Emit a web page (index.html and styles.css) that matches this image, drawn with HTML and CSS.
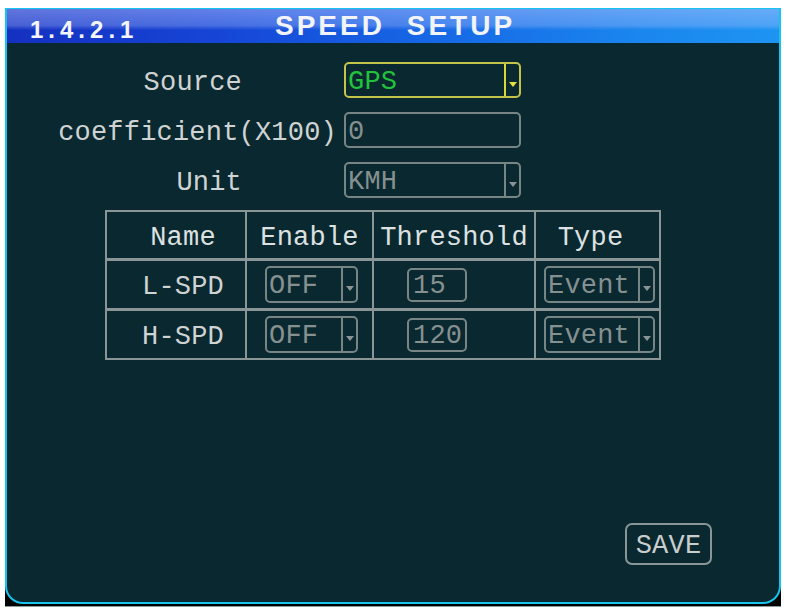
FILE: index.html
```html
<!DOCTYPE html>
<html>
<head>
<meta charset="utf-8">
<title>Speed Setup</title>
<link rel="stylesheet" href="styles.css">
</head>
<body>
<div class="screen">
  <div class="panel">
    <header class="titlebar">
      <span class="menu-id">1.4.2.1</span>
      <span class="title">SPEED SETUP</span>
    </header>

    <div class="form">
      <div class="label label-short">Source</div>
      <div class="field select active">
        <span class="value green">GPS</span>
        <span class="arrow"><i></i></span>
      </div>

      <div class="label">coefficient(X100)</div>
      <div class="field input">
        <span class="value">0</span>
      </div>

      <div class="label label-short">Unit</div>
      <div class="field select">
        <span class="value">KMH</span>
        <span class="arrow"><i></i></span>
      </div>
    </div>

    <div class="tbl">
      <div class="cell head name">Name</div>
      <div class="cell head">Enable</div>
      <div class="cell head">Threshold</div>
      <div class="cell head type">Type</div>

      <div class="cell name">L-SPD</div>
      <div class="cell left"><div class="field select enable"><span class="value">OFF</span><span class="arrow"><i></i></span></div></div>
      <div class="cell left"><div class="field input thr"><span class="value">15</span></div></div>
      <div class="cell left"><div class="field select evt"><span class="value">Event</span><span class="arrow"><i></i></span></div></div>

      <div class="cell name">H-SPD</div>
      <div class="cell left"><div class="field select enable"><span class="value">OFF</span><span class="arrow"><i></i></span></div></div>
      <div class="cell left"><div class="field input thr"><span class="value">120</span></div></div>
      <div class="cell left"><div class="field select evt"><span class="value">Event</span><span class="arrow"><i></i></span></div></div>
    </div>

    <div class="footer">
      <div class="save">SAVE</div>
    </div>
  </div>
</div>
</body>
</html>
```

FILE: styles.css
```css
* { box-sizing: border-box; }

html, body {
  margin: 0;
  padding: 0;
  background: #ffffff;
}

body {
  font-family: "Liberation Mono", "Courier New", monospace;
}

.screen {
  width: 776px;
  height: 599px;
  margin: 8px 0 0 5px;
  background: #000000;
  border-bottom: 1px solid #8e9a9a;
}

.panel {
  height: 596px;
  background: #0a282f;
  border: 2px solid #17c4ee;
  border-top-width: 1px;
  border-radius: 0 0 18px 18px;
  display: flex;
  flex-direction: column;
}

/* ---------- title bar ---------- */
.titlebar {
  height: 34px;
  display: flex;
  align-items: center;
  padding-left: 23px;
  background:
    linear-gradient(to bottom, rgba(190,200,255,0.45) 0%, rgba(175,195,255,0.33) 48%, rgba(255,255,255,0) 62%),
    linear-gradient(to right, #1530c0 0%, #1646d6 28%, #1664e4 52%, #1a86ee 82%, #1e94f2 100%);
}

.menu-id {
  width: 245px;
  padding-top: 8px;
  font-family: "Liberation Sans", Arial, sans-serif;
  font-weight: bold;
  font-size: 24px;
  letter-spacing: 5px;
  color: #f4f6ff;
}

.title {
  font-family: "Liberation Sans", Arial, sans-serif;
  font-weight: bold;
  font-size: 28px;
  letter-spacing: 3px;
  word-spacing: 11px;
  color: #f2f4fa;
}

/* ---------- form ---------- */
.form {
  display: grid;
  grid-template-columns: 279px 177px;
  grid-auto-rows: 36px;
  column-gap: 7px;
  row-gap: 14px;
  margin: 19px 0 0 51px;
}

.label {
  display: flex;
  align-items: center;
  justify-content: flex-end;
  padding-top: 5px;
  font-size: 27px;
  letter-spacing: 0.2px;
  color: #cfd3d3;
  white-space: nowrap;
}

.label-short { padding-right: 95px; }

.field {
  display: flex;
  align-items: stretch;
  border: 2px solid #788585;
  border-radius: 5px;
  height: 36px;
}

.value {
  flex: 1;
  display: flex;
  align-items: center;
  padding: 4px 0 0 2px;
  font-size: 27px;
  line-height: 1;
  letter-spacing: 0.2px;
  color: #859090;
  white-space: nowrap;
}

.value.green { color: #22c23c; }

.arrow {
  width: 15px;
  border-left: 2px solid #788585;
  display: flex;
  justify-content: center;
  align-items: center;
  padding-top: 8px;
}

.arrow i {
  width: 0;
  height: 0;
  border-left: 4px solid transparent;
  border-right: 4px solid transparent;
  border-top: 5px solid #8a9494;
}

.field.active { border-color: #c4c44a; }
.field.active .arrow { border-left-color: #d8d83c; }
.field.active .arrow i { border-top-color: #e8e040; }

/* ---------- table ---------- */
.tbl {
  align-self: flex-start;
  margin: 12px 0 0 98px;
  display: grid;
  grid-template-columns: 138px 125px 160px 123px;
  grid-template-rows: 46px 47px 47px;
  column-gap: 2px;
  row-gap: 3px;
  padding: 2px;
  background: #8a9696;
}

.cell {
  background: #0a282f;
  display: flex;
  align-items: center;
  justify-content: center;
  font-size: 27px;
  letter-spacing: 0.2px;
  color: #cfd3d3;
  white-space: nowrap;
}

.cell.head, .cell.name { padding-top: 5px; }
.cell.head { color: #dde1e1; }
.cell.name { padding-left: 14px; }
.cell.type { padding-right: 14px; }
.cell.left { justify-content: flex-start; }

.field.enable { width: 93px; height: 37px; margin-left: 18px; }
.field.thr { width: 60px; height: 34px; margin-left: 33px; }
.field.thr .value { padding-left: 4px; }
.field.evt { width: 111px; height: 37px; margin-left: 8px; }

/* ---------- footer ---------- */
.footer {
  margin-top: auto;
  display: flex;
  justify-content: flex-end;
  padding: 0 67px 37px 0;
}

.save {
  width: 87px;
  height: 42px;
  border: 2px solid #8a9696;
  border-radius: 7px;
  display: flex;
  align-items: center;
  justify-content: center;
  padding-top: 4px;
  font-size: 27px;
  letter-spacing: 0.2px;
  color: #c8cdcd;
}
```
